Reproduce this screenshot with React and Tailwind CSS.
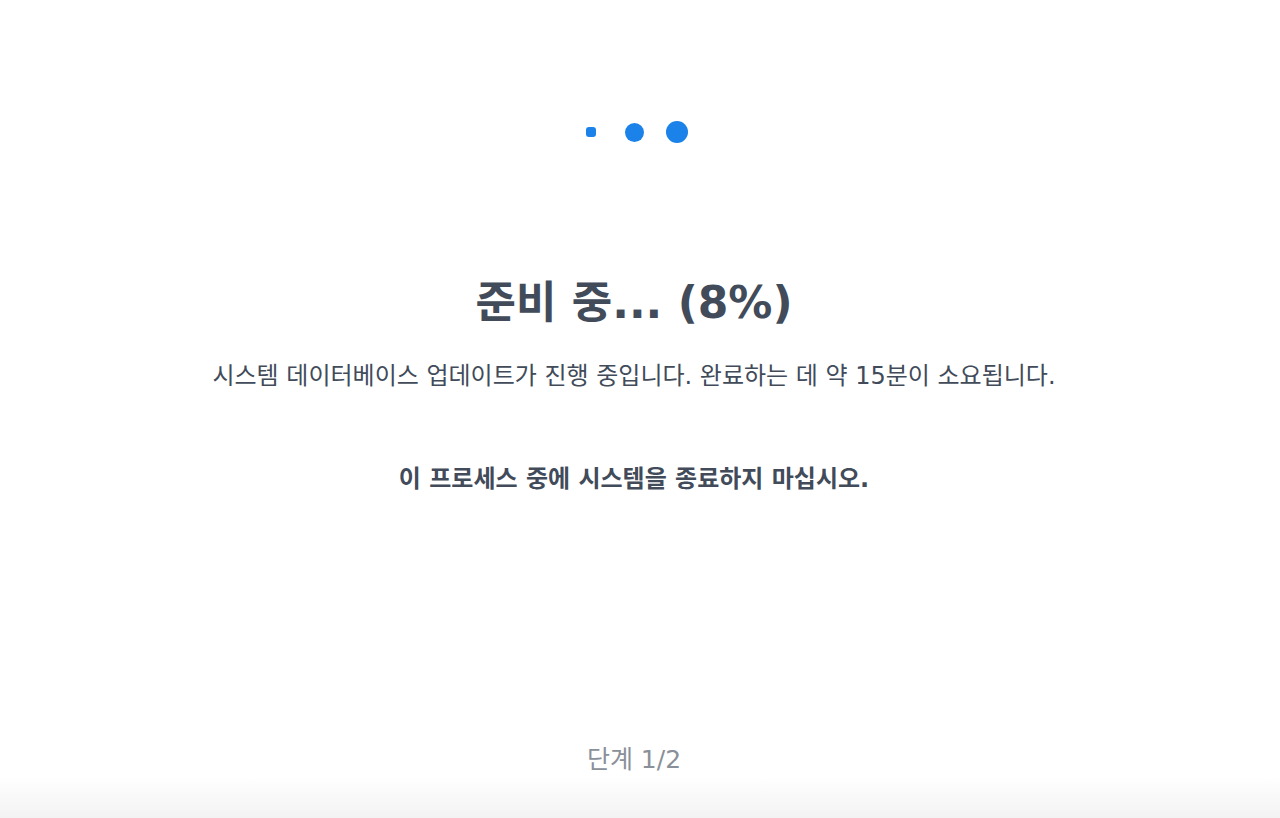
export default function App() {
  const font = { fontFamily: '"DejaVu Sans", "Noto Sans CJK KR", sans-serif' };
  return (
    <div
      className="flex h-[818px] w-full flex-col items-center bg-white text-[#414b5a]"
      style={font}
    >
      <div className="flex w-full flex-1 flex-col items-center pr-[12px]">
        <div className="flex h-[264px] items-center">
          <div className="flex items-center">
            <span className="flex w-[43px] justify-center">
              <span className="h-[10px] w-[10px] rounded-[3px] bg-[#1a82e8]" />
            </span>
            <span className="flex w-[43px] justify-center">
              <span className="h-[19px] w-[19px] rounded-full bg-[#1a82e8]" />
            </span>
            <span className="flex w-[43px] justify-center">
              <span className="h-[22px] w-[22px] rounded-full bg-[#1a82e8]" />
            </span>
          </div>
        </div>
        <h1 className="mt-[13px] text-[44px] font-bold leading-[52px]">준비 중... (8%)</h1>
        <p className="mt-[31px] text-[24px] leading-[32px]">
          시스템 데이터베이스 업데이트가 진행 중입니다. 완료하는 데 약 15분이 소요됩니다.
        </p>
        <p className="mt-[71px] text-[24px] font-bold leading-[32px]">
          이 프로세스 중에 시스템을 종료하지 마십시오.
        </p>
        <div className="flex-1" />
        <p className="text-[25px] leading-[32px] text-[#8a9099]">단계 1/2</p>
      </div>
      <div className="h-[42px] w-full bg-gradient-to-b from-white to-[#f3f3f3]" />
    </div>
  );
}
